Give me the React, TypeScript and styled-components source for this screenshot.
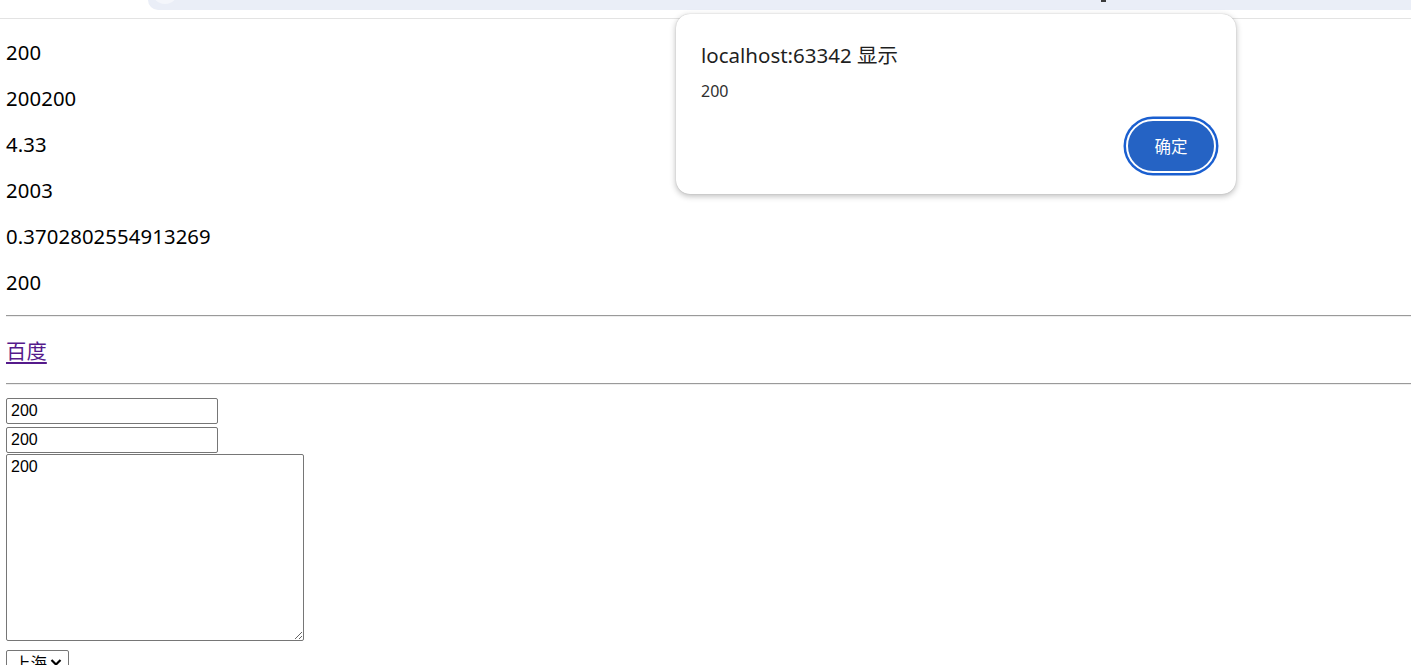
import React from "react";
import styled, { createGlobalStyle } from "styled-components";

const Global = createGlobalStyle`
  html, body { margin: 0; padding: 0; background: #fff; }
  body { font-family: "Noto Sans", "Noto Sans CJK SC", sans-serif; color: #000; overflow: hidden; }
`;

const Page = styled.div`
  position: relative;
  width: 1411px;
  height: 665px;
  overflow: hidden;
`;

const BrowserStrip = styled.div`
  height: 18px;
  border-bottom: 1px solid #e3e3e3;
  display: flex;
`;

const AddressBar = styled.div`
  position: relative;
  margin-left: 148px;
  flex: 1;
  height: 10px;
  background: #eaeef7;
  border-bottom-left-radius: 12px;
`;

const BarIconTip = styled.div`
  position: absolute;
  left: 4px;
  top: -22px;
  width: 26px;
  height: 26px;
  border-radius: 50%;
  background: #f4f6fb;
`;

const BarMark = styled.div`
  position: absolute;
  left: 953px;
  top: 0;
  width: 5px;
  height: 2px;
  background: #3b3b3b;
`;

const Content = styled.div`
  padding: 20px 6px 0;
  display: flex;
  flex-direction: column;
  align-items: flex-start;
`;

const Para = styled.p`
  margin: 0 0 20px;
  font-family: "Noto Sans", "Noto Sans CJK SC", sans-serif;
  font-size: 20.3px;
  line-height: 27px;
  height: 26px;
  letter-spacing: 0.12px;
  white-space: nowrap;
  color: #000;
`;

const Rule = styled.hr`
  align-self: stretch;
  margin: 0 -6px 20px 0;
  border: none;
  border-top: 1px solid #9a9a9a;
  border-bottom: 1px solid #eeeeee;
  height: 0;
`;

const Link = styled.a`
  color: #551a8b;
  font-family: "Noto Sans CJK SC", sans-serif;
  text-decoration: underline;
  text-underline-offset: 3px;
`;

const TextInput = styled.input<{ $top: number }>`
  box-sizing: border-box;
  width: 212px;
  height: 26px;
  margin: ${(p) => p.$top}px 0 0;
  padding: 0 4px;
  border: 1px solid #767676;
  border-radius: 2px;
  font-family: "Liberation Sans", Arial, sans-serif;
  font-size: 16px;
  color: #000;
  outline: none;
`;

const Area = styled.textarea`
  box-sizing: border-box;
  width: 298px;
  height: 187px;
  margin: 1px 0 0;
  padding: 2px 4px;
  border: 1px solid #767676;
  border-radius: 2px;
  font-family: "Liberation Sans", Arial, sans-serif;
  font-size: 16px;
  line-height: 19px;
  color: #000;
  resize: both;
  outline: none;
`;

const SelectWrap = styled.div`
  position: relative;
  margin-top: 9px;
  width: 63px;
  height: 26px;
`;

const Select = styled.select`
  box-sizing: border-box;
  appearance: none;
  -webkit-appearance: none;
  width: 63px;
  height: 26px;
  padding: 0 18px 0 7px;
  border: 1px solid #767676;
  border-radius: 2px;
  background: #fff;
  font-family: "Noto Sans CJK SC", sans-serif;
  font-size: 16.5px;
  line-height: 24px;
  color: #000;
  outline: none;
`;

const Chevron = styled.svg`
  position: absolute;
  left: 44px;
  top: 8px;
  width: 12px;
  height: 9px;
  pointer-events: none;
`;

const Dialog = styled.div`
  position: absolute;
  left: 676px;
  top: 14px;
  width: 560px;
  height: 180px;
  box-sizing: border-box;
  padding: 27px 20px 21px 25px;
  background: #fff;
  border-radius: 14px;
  box-shadow: 0 2px 6px rgba(0, 0, 0, 0.28), 0 0 1px rgba(0, 0, 0, 0.25);
  display: flex;
  flex-direction: column;
  font-family: "Noto Sans", "Noto Sans CJK SC", sans-serif;
`;

const DialogTitle = styled.div`
  font-size: 20.5px;
  line-height: 28px;
  color: #1f1f1f;
`;

const DialogMessage = styled.div`
  margin-top: 12px;
  font-size: 16px;
  line-height: 20px;
  color: #303030;
`;

const DialogFooter = styled.div`
  margin-top: auto;
  display: flex;
  justify-content: flex-end;
`;

const OkButton = styled.button`
  box-sizing: border-box;
  width: 90px;
  height: 54px;
  border-radius: 27px;
  border: 2px solid #fff;
  background: #2563c4;
  box-shadow: 0 0 0 2.5px #1a5fd0;
  color: #fff;
  font-family: "Noto Sans CJK SC", sans-serif;
  font-size: 16.5px;
  cursor: pointer;
`;

export default function App() {
  return (
    <Page>
      <Global />
      <BrowserStrip>
        <AddressBar>
          <BarIconTip />
          <BarMark />
        </AddressBar>
      </BrowserStrip>
      <Content>
        <Para>200</Para>
        <Para>200200</Para>
        <Para>4.33</Para>
        <Para>2003</Para>
        <Para>0.3702802554913269</Para>
        <Para>200</Para>
        <Rule />
        <Para>
          <Link href="#">百度</Link>
        </Para>
        <Rule />
        <TextInput $top={-7} defaultValue="200" />
        <TextInput $top={3} defaultValue="200" />
        <Area defaultValue="200" />
        <SelectWrap>
          <Select defaultValue="sh">
            <option value="sh">上海</option>
          </Select>
          <Chevron viewBox="0 0 12 9">
            <path d="M1.5 2 L6 6.5 L10.5 2" fill="none" stroke="#000" strokeWidth="2.2" />
          </Chevron>
        </SelectWrap>
      </Content>
      <Dialog>
        <DialogTitle>localhost:63342 显示</DialogTitle>
        <DialogMessage>200</DialogMessage>
        <DialogFooter>
          <OkButton>确定</OkButton>
        </DialogFooter>
      </Dialog>
    </Page>
  );
}
